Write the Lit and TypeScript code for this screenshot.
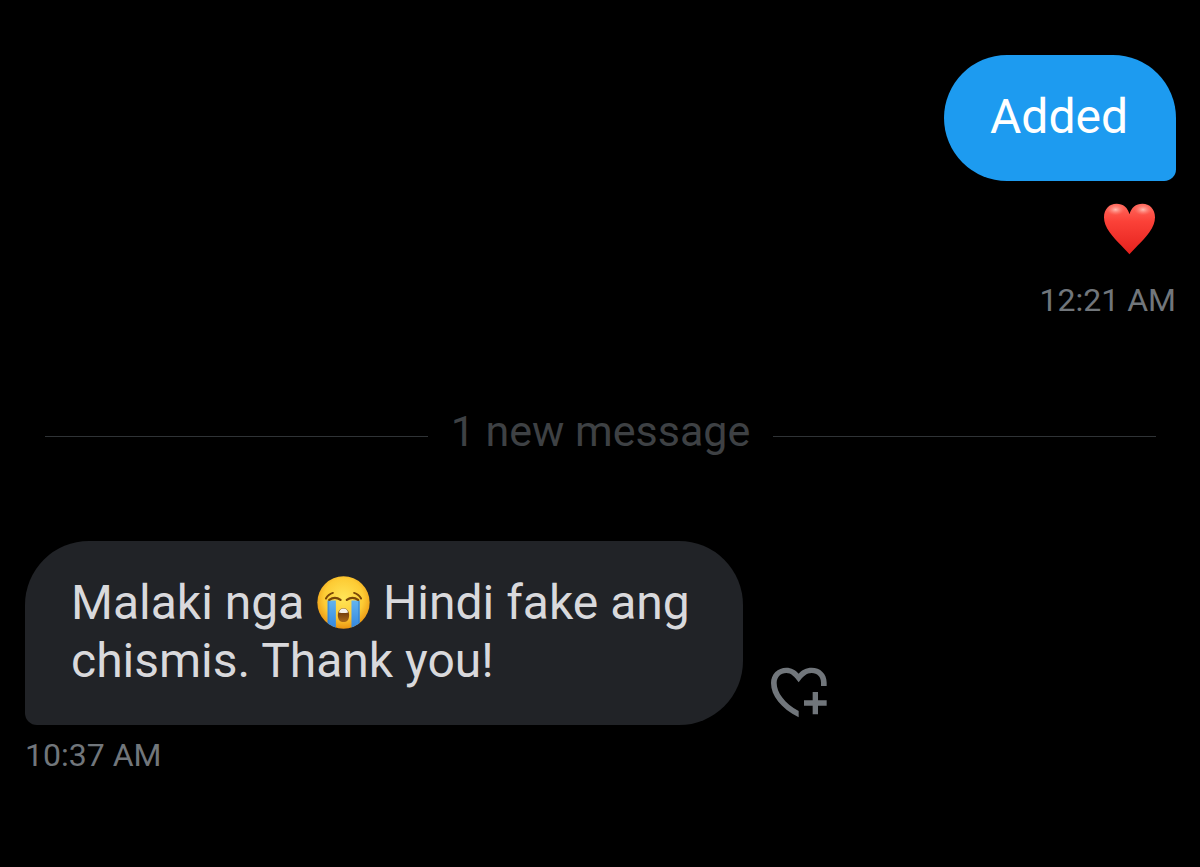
import { LitElement, html, css } from "lit";
import { customElement } from "lit/decorators.js";

const heart = html`
  <svg class="emoji" viewBox="0 0 160 156" aria-hidden="true">
    <defs>
      <linearGradient id="heart-fill" x1="0" y1="0" x2="0" y2="1">
        <stop offset="0" stop-color="#ff6a5e" />
        <stop offset="0.35" stop-color="#fb4138" />
        <stop offset="1" stop-color="#e5211d" />
      </linearGradient>
      <radialGradient id="heart-shine">
        <stop offset="0" stop-color="#ffd0c6" stop-opacity="0.85" />
        <stop offset="1" stop-color="#ff8a7c" stop-opacity="0" />
      </radialGradient>
    </defs>
    <path fill="url(#heart-fill)" d="M80 155C74 145 40 116 20 88C9 73 3 59 3 43C3 18 19 2 41 2C61 2 75 14 80 34C85 14 99 2 119 2C141 2 157 18 157 43C157 59 151 73 140 88C120 116 86 145 80 155Z" />
    <ellipse cx="38" cy="20" rx="27" ry="17" fill="url(#heart-shine)" />
    <ellipse cx="121" cy="20" rx="27" ry="17" fill="url(#heart-shine)" />
  </svg>`;

const crying = html`
  <svg class="emoji inline" viewBox="0 0 160 160" role="img" aria-label="Loudly crying face">
    <defs>
      <radialGradient id="face" cx="0.5" cy="0.42" r="0.58">
        <stop offset="0" stop-color="#ffe558" />
        <stop offset="0.65" stop-color="#fdcb34" />
        <stop offset="1" stop-color="#ea9512" />
      </radialGradient>
      <linearGradient id="tear" x1="0" y1="0" x2="0" y2="1">
        <stop offset="0" stop-color="#63b4ef" />
        <stop offset="1" stop-color="#3185dd" />
      </linearGradient>
      <linearGradient id="mouth" x1="0" y1="0" x2="0" y2="1">
        <stop offset="0" stop-color="#5c2a05" />
        <stop offset="1" stop-color="#a9691a" />
      </linearGradient>
      <clipPath id="round"><circle cx="80" cy="80" r="79" /></clipPath>
    </defs>
    <circle cx="80" cy="80" r="79" fill="url(#face)" />
    <g clip-path="url(#round)" fill="url(#tear)">
      <path d="M32 74H57V160H32Z" />
      <path d="M104 74H129V160H104Z" />
      <path d="M32 74H37V160H32ZM124 74H129V160H124Z" fill="#2779cd" opacity="0.5" />
    </g>
    <g fill="none" stroke="#7a4708" stroke-width="6" stroke-linecap="round">
      <path d="M27 68Q34 55 48 51" />
      <path d="M133 68Q126 55 112 51" />
      <path d="M37 72Q54 60 71 72" stroke-width="7" />
      <path d="M90 72Q107 60 124 72" stroke-width="7" />
    </g>
    <path fill="url(#mouth)" d="M80 97C91 97 97 107 97 119C97 132 90 139 80 139C70 139 63 132 63 119C63 107 69 97 80 97Z" />
    <path fill="#f6f1e8" d="M80 98C87 98 93 103 94 110Q80 114 66 110C67 103 73 98 80 98Z" />
  </svg>`;

const addReaction = html`
  <svg class="add-icon" viewBox="48 36 168 156" aria-hidden="true">
    <path fill="currentColor" d="M131 187C78 160 48 122 48 84C48 57 68 38 94 38C109 38 122 45 131 56C140 45 153 38 170 38C196 38 215 56 215 83V93H198V83C198 66 187 54 170 54C155 54 144 64 131 82C118 64 108 54 94 54C77 54 65 66 65 84C65 112 88 145 131 168Z" />
    <path fill="currentColor" d="M173 111H189V136H215V152H189V178H173V152H147V136H173Z" />
  </svg>`;

@customElement("app-root")
export class AppRoot extends LitElement {
  static styles = css`
    :host {
      display: block;
      box-sizing: border-box;
      min-height: 100vh;
      padding: 55px 24px 40px 25px;
      background: #000;
      color: #71767b;
      font-family: Roboto, "Open Sans", sans-serif;
    }
    .message {
      display: flex;
      flex-direction: column;
      align-items: flex-start;
    }
    .sent {
      align-items: flex-end;
    }
    .row {
      display: flex;
      align-items: flex-end;
      gap: 28px;
      width: 100%;
    }
    .bubble {
      margin: 0;
      padding: 33px 48px 35px 46px;
      border-radius: 64px;
      font-size: 48px;
      line-height: 58px;
    }
    .sent .bubble {
      background: #1d9bf0;
      color: #fff;
      border-bottom-right-radius: 12px;
    }
    .received .bubble {
      box-sizing: border-box;
      max-width: 62.4%;
      background: #212327;
      color: #d9d9dc;
      border-bottom-left-radius: 12px;
    }
    button {
      display: block;
      padding: 0;
      border: 0;
      background: none;
      color: inherit;
      cursor: pointer;
    }
    .reaction {
      margin: 22px 20px 25px;
    }
    .emoji {
      display: block;
      width: 53px;
    }
    .inline {
      display: inline-block;
      margin: 0 1px;
      vertical-align: -10px;
    }
    .add {
      flex: none;
      margin-bottom: 6px;
    }
    .add-icon {
      display: block;
      width: 56px;
      height: 52px;
    }
    time {
      font-size: 32px;
      line-height: 40px;
    }
    .received time {
      margin-top: 10px;
    }
    .divider {
      display: flex;
      align-items: center;
      gap: 23px;
      margin: 83px 20px 70px;
      color: #3e4144;
      font-size: 43px;
      line-height: 56px;
    }
    .divider span {
      padding-bottom: 12px;
    }
    .divider::before,
    .divider::after {
      content: "";
      flex: 1;
      height: 1px;
      background: #2f3336;
    }
  `;

  render() {
    return html`
      <main>
        <article class="message sent">
          <p class="bubble">Added</p>
          <button class="reaction" aria-label="Heart reaction">${heart}</button>
          <time datetime="00:21">12:21 AM</time>
        </article>
        <div class="divider"><span>1 new message</span></div>
        <article class="message received">
          <div class="row">
            <p class="bubble">Malaki nga ${crying} Hindi fake ang chismis. Thank you!</p>
            <button class="add" aria-label="Add reaction">${addReaction}</button>
          </div>
          <time datetime="10:37">10:37 AM</time>
        </article>
      </main>
    `;
  }
}
